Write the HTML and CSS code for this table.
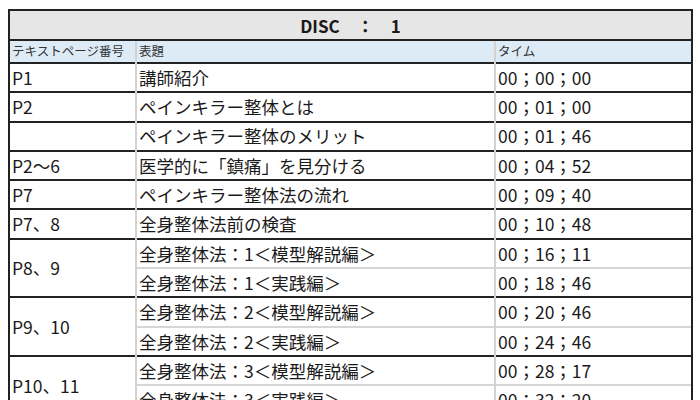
FILE: index.html
```html
<!DOCTYPE html>
<html lang="ja">
<head>
<meta charset="utf-8">
<link rel="stylesheet" href="styles.css">
</head>
<body>
<table class="sheet">
  <colgroup>
    <col class="c-page">
    <col class="c-title">
    <col class="c-time">
  </colgroup>
  <tr class="disc"><td colspan="3">DISC　：　1</td></tr>
  <tr class="head"><td class="pg">テキストページ番号</td><td>表題</td><td class="tm">タイム</td></tr>
  <tr class="row"><td class="pg">P1</td><td>講師紹介</td><td class="tm">00；00；00</td></tr>
  <tr class="row"><td class="pg">P2</td><td>ペインキラー整体とは</td><td class="tm">00；01；00</td></tr>
  <tr class="row"><td class="pg"></td><td>ペインキラー整体のメリット</td><td class="tm">00；01；46</td></tr>
  <tr class="row"><td class="pg">P2〜6</td><td>医学的に「鎮痛」を見分ける</td><td class="tm">00；04；52</td></tr>
  <tr class="row"><td class="pg">P7</td><td>ペインキラー整体法の流れ</td><td class="tm">00；09；40</td></tr>
  <tr class="row"><td class="pg">P7、8</td><td>全身整体法前の検査</td><td class="tm">00；10；48</td></tr>
  <tr class="row"><td class="pg" rowspan="2">P8、9</td><td>全身整体法：1＜模型解説編＞</td><td class="tm">00；16；11</td></tr>
  <tr class="row sub"><td>全身整体法：1＜実践編＞</td><td class="tm">00；18；46</td></tr>
  <tr class="row"><td class="pg" rowspan="2">P9、10</td><td>全身整体法：2＜模型解説編＞</td><td class="tm">00；20；46</td></tr>
  <tr class="row sub"><td>全身整体法：2＜実践編＞</td><td class="tm">00；24；46</td></tr>
  <tr class="row"><td class="pg" rowspan="2">P10、11</td><td>全身整体法：3＜模型解説編＞</td><td class="tm">00；28；17</td></tr>
  <tr class="row sub"><td>全身整体法：3＜実践編＞</td><td class="tm">00；32；20</td></tr>
</table>
</body>
</html>
```

FILE: styles.css
```css
html, body {
  margin: 0;
  padding: 0;
  background: #ffffff;
  overflow: hidden;
}
body {
  padding: 9px 9px 0 8px;
  font-family: "Noto Sans CJK JP", "Noto Sans", sans-serif;
  color: #1a1a1a;
}
.sheet {
  width: 683px;
  border-collapse: collapse;
  table-layout: fixed;
}
.c-page { width: 127px; }
.c-title { width: 359px; }
.c-time { width: 197px; }

.sheet td {
  padding: 0 0 0 2px;
  line-height: 1;
  white-space: nowrap;
  border-top: 2px solid #222;
  border-left: 2px solid #d2d2d2;
  vertical-align: middle;
}
.sheet td.pg { border-left: 2px solid #222; }
.sheet td.tm { border-right: 2px solid #222; }

.disc td {
  height: 28px;
  background: #e7e6e6;
  text-align: center;
  font-weight: 700;
  font-size: 17px;
  padding: 0;
  border-left: 2px solid #222;
  border-right: 2px solid #222;
}
.head td {
  height: 21px;
  background: #ddebf7;
  font-size: 12.5px;
  color: #333;
}
.row td {
  height: 27.3px;
  font-size: 17.5px;
}
.sheet .sub td { border-top: 2px solid #d6d6d6; }
```
